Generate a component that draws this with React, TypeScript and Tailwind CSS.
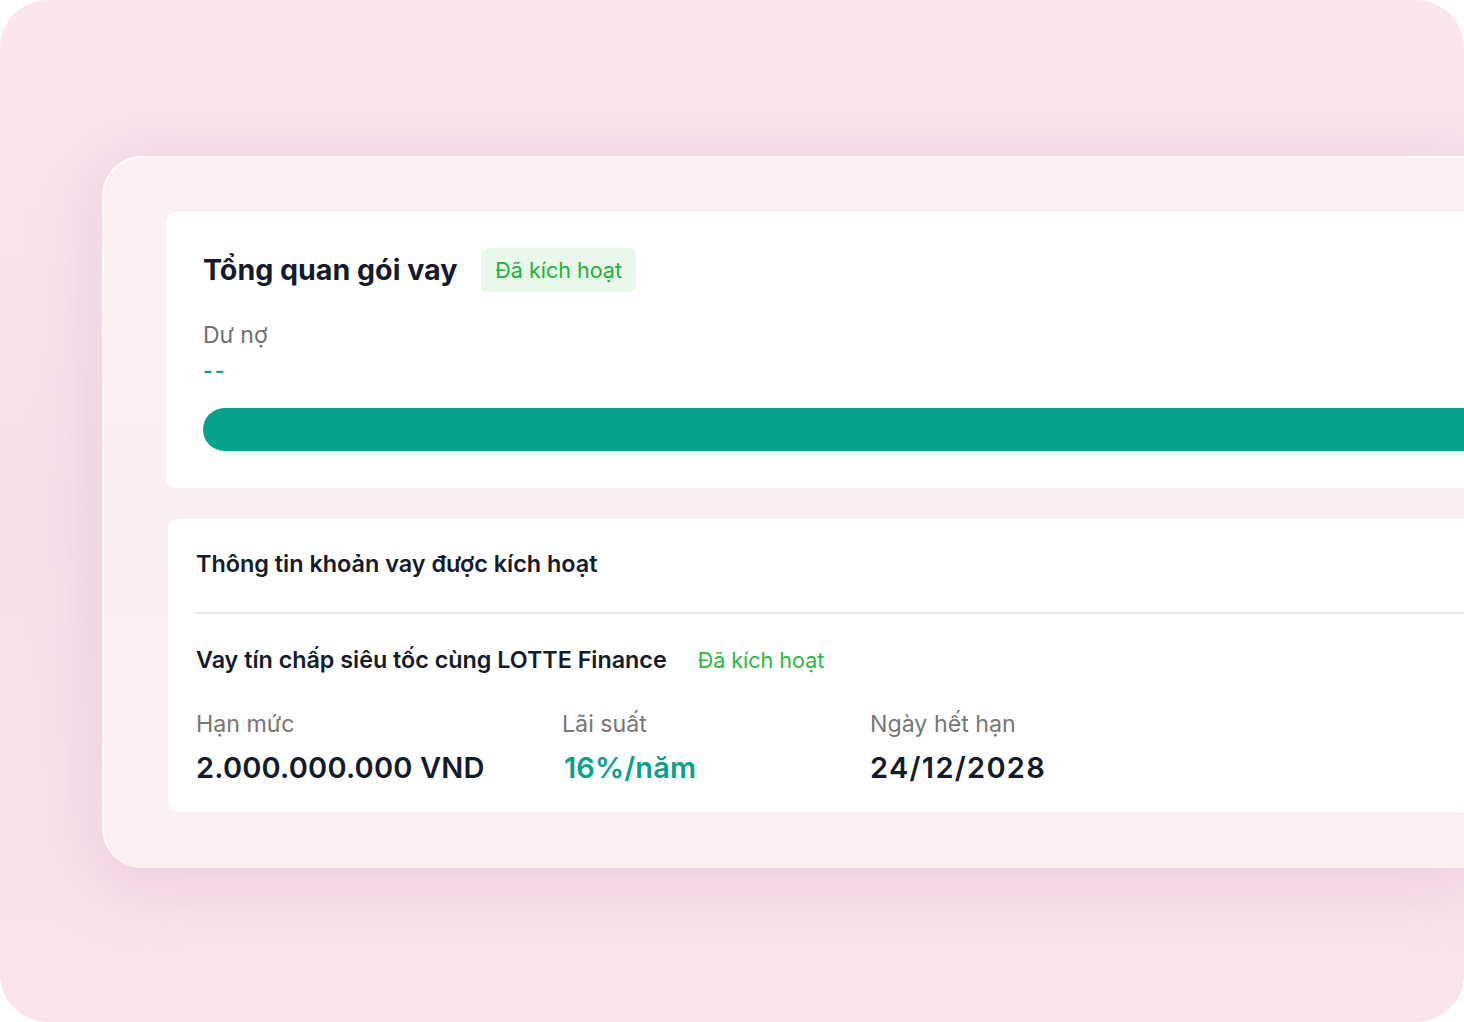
import React from "react";

export default function App() {
  return (
    <div className="w-[1464px] h-[1022px] bg-white overflow-hidden" style={{ fontFamily: "Inter, 'Noto Sans', sans-serif" }}>
      <div className="w-full h-full rounded-[48px] overflow-hidden bg-gradient-to-b from-[#fce6ee] via-[#f6e1ea] to-[#fbe4ec] pt-[156px] pl-[102px]">
        <div className="h-[712px] rounded-l-[40px] bg-[#fcf0f3]/90 border-t-2 border-l-2 border-white/70 shadow-[0_10px_60px_10px_rgba(214,180,205,0.4)] pt-[54px] pl-[62px]">
          <div className="h-[276px] bg-white rounded-l-[10px] pl-[37px] pt-[36px]">
            <div className="flex items-center gap-[24px]">
              <span className="text-[28.6px] leading-[44px] font-bold text-[#141b2d]">Tổng quan gói vay</span>
              <span className="h-[44px] px-[14px] rounded-[6px] bg-[#e8f8ea] text-[#22b33a] text-[21.5px] leading-[44px]">Đã kích hoạt</span>
            </div>
            <div className="mt-[29px] text-[23px] leading-[28px] text-[#707070]">Dư nợ</div>
            <div className="mt-[8px] text-[21px] leading-[28px] font-semibold text-[#08a189] tracking-[2px]">--</div>
            <div className="mt-[23px] h-[43px] rounded-l-full bg-[#04a38a]"></div>
          </div>
          <div className="mt-[31px] ml-[2px] h-[293px] bg-white rounded-l-[10px] pl-[28px] pt-[29px]">
            <div className="text-[23.4px] leading-[32px] font-semibold text-[#141b2d]">Thông tin khoản vay được kích hoạt</div>
            <div className="mt-[32px] h-[2px] bg-[#e8e8e8]"></div>
            <div className="mt-[30px] flex items-center gap-[31px]">
              <span className="text-[23.3px] leading-[32px] font-semibold text-[#141b2d]">Vay tín chấp siêu tốc cùng LOTTE Finance</span>
              <span className="text-[21.5px] leading-[32px] text-[#2bb843]">Đã kích hoạt</span>
            </div>
            <div className="mt-[32px] flex">
              <div className="w-[366px]">
                <div className="text-[23.2px] leading-[32px] text-[#767676]">Hạn mức</div>
                <div className="mt-[8px] text-[29px] leading-[40px] font-semibold text-[#141b2d] tracking-[0.2px]">2.000.000.000 VND</div>
              </div>
              <div className="w-[308px]">
                <div className="text-[23.2px] leading-[32px] text-[#767676]">Lãi suất</div>
                <div className="mt-[8px] text-[29px] leading-[40px] font-semibold text-[#08a189] tracking-[0.1px] pl-[2px]">16%/năm</div>
              </div>
              <div>
                <div className="text-[23.2px] leading-[32px] text-[#767676]">Ngày hết hạn</div>
                <div className="mt-[8px] text-[29px] leading-[40px] font-semibold text-[#141b2d] tracking-[1.3px]">24/12/2028</div>
              </div>
            </div>
          </div>
        </div>
      </div>
    </div>
  );
}
